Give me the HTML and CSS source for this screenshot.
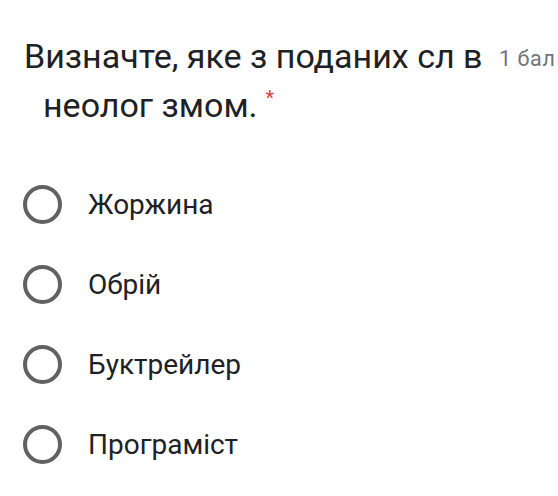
FILE: index.html
```html
<!DOCTYPE html>
<html lang="uk">
<head>
<meta charset="utf-8">
<link rel="stylesheet" href="styles.css">
</head>
<body>
<div class="page">
  <div class="header">
    <div class="title">Визначте, яке з поданих сл в неолог змом.<span class="req">*</span></div>
    <div class="points">1 бал</div>
  </div>
  <div class="options">
    <div class="option"><span class="radio"></span><span class="label">Жоржина</span></div>
    <div class="option"><span class="radio"></span><span class="label">Обрій</span></div>
    <div class="option"><span class="radio"></span><span class="label">Буктрейлер</span></div>
    <div class="option"><span class="radio"></span><span class="label">Програміст</span></div>
  </div>
</div>
</body>
</html>
```
FILE: styles.css
```css
html, body {
  margin: 0;
  padding: 0;
  background: #ffffff;
  overflow: hidden;
}
.page {
  width: 558px;
  height: 496px;
  overflow: hidden;
  font-family: Roboto, "Noto Sans", sans-serif;
  color: #202124;
}
.header {
  display: flex;
  align-items: flex-start;
  padding: 32px 0 0 24px;
  width: 700px;
}
.title {
  width: 468px;
  flex: none;
  font-size: 34px;
  line-height: 49px;
  padding-left: 19px;
  text-indent: -19px;
  box-sizing: border-box;
}
.req {
  display: inline-block;
  color: #d9453a;
  font-size: 20px;
  vertical-align: top;
  line-height: 26px;
  margin-top: 4px;
  margin-left: 8px;
  text-indent: 0;
}
.points {
  flex: none;
  margin-left: 7px;
  padding-top: 12px;
  font-size: 21.5px;
  letter-spacing: 0.6px;
  line-height: 30px;
  color: #70757a;
  white-space: nowrap;
}
.options {
  display: flex;
  flex-direction: column;
  padding: 34px 0 0 23px;
}
.option {
  display: flex;
  align-items: center;
  height: 80px;
}
.radio {
  width: 39px;
  height: 39px;
  box-sizing: border-box;
  border: 4px solid #616161;
  border-radius: 50%;
  flex: none;
}
.label {
  margin-left: 26px;
  font-size: 28px;
  color: #202124;
}
```
